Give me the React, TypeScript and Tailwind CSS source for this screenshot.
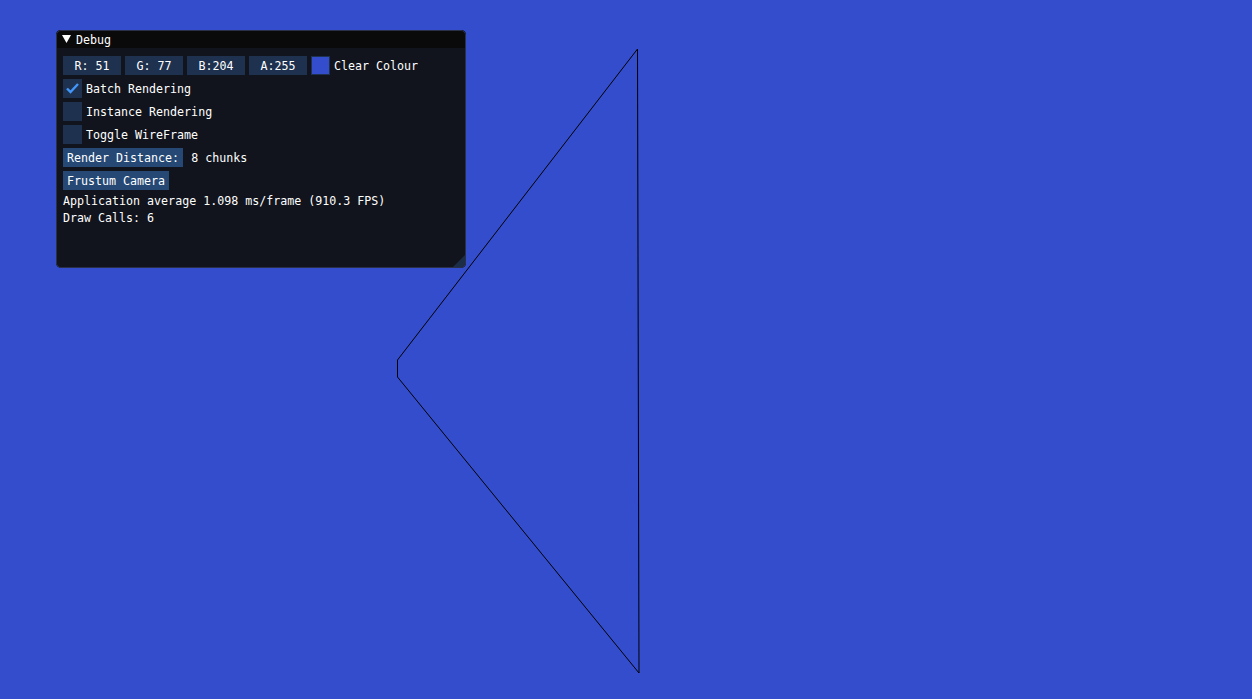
function Frame({ children, className = "" }: { children?: React.ReactNode; className?: string }) {
  return (
    <div className={`h-[19px] bg-[#1e314e] flex items-center justify-center pt-[2px] ${className}`}>{children}</div>
  );
}

function Checkbox({ label, checked }: { label: string; checked?: boolean }) {
  return (
    <div className="flex items-center h-[19px] gap-[4px]">
      <div className="w-[19px] h-[19px] bg-[#1e314e] flex items-center justify-center">
        {checked && (
          <svg width="15" height="15" viewBox="0 0 15 15">
            <polyline points="2,7.5 5.5,11 13,3" fill="none" stroke="#4296fa" strokeWidth="2.4" />
          </svg>
        )}
      </div>
      <span className="pt-[2px]">{label}</span>
    </div>
  );
}

export default function App() {
  return (
    <div className="relative w-[1252px] h-[699px] bg-[#334dcc] overflow-hidden text-white font-['DejaVu_Sans_Mono',monospace] text-[11.65px] leading-[13px]">
      {/* scene */}
      <svg className="absolute inset-0" width="1252" height="699">
        <polyline points="637.5,49 397.5,360 397.5,377 639,673 637.5,49" fill="none" stroke="#000" strokeWidth="1" />
      </svg>

      {/* Debug window */}
      <div className="absolute left-[56px] top-[30px] w-[410px] h-[238px] rounded-[5px] overflow-hidden bg-[#11141c] outline outline-1 -outline-offset-1 outline-[#2a3048] flex flex-col">
        <div className="h-[18px] bg-[#0a0a0a] flex items-center gap-[5px] pl-[6px] shrink-0">
          <svg width="9" height="8" viewBox="0 0 9 8">
            <polygon points="0,0 9,0 4.5,8" fill="#fff" />
          </svg>
          <span className="pt-[2px]">Debug</span>
        </div>
        <div className="flex flex-col gap-[4px] pl-[7px] pt-[8px]">
          <div className="flex items-center gap-[4px]">
            <Frame className="w-[58px]">R: 51</Frame>
            <Frame className="w-[58px]">G: 77</Frame>
            <Frame className="w-[58px]">B:204</Frame>
            <Frame className="w-[58px]">A:255</Frame>
            <div className="w-[19px] h-[19px] bg-[#1e314e] p-[1px]">
              <div className="w-full h-full bg-[#334dcc]" />
            </div>
            <span className="pt-[2px]">Clear Colour</span>
          </div>
          <Checkbox label="Batch Rendering" checked />
          <Checkbox label="Instance Rendering" />
          <Checkbox label="Toggle WireFrame" />
          <div className="flex items-center gap-[8px]">
            <div className="h-[19px] bg-[#254874] px-[4px] pt-[2px] flex items-center">Render Distance:</div>
            <span className="pt-[2px]">8 chunks</span>
          </div>
          <div className="flex">
            <div className="h-[19px] bg-[#254874] px-[4px] pt-[2px] flex items-center">Frustum Camera</div>
          </div>
          <div className="flex flex-col gap-[4px] pt-[1px]">
            <span>Application average 1.098 ms/frame (910.3 FPS)</span>
            <span>Draw Calls: 6</span>
          </div>
        </div>
        <div className="flex-1" />
        <div className="flex justify-end">
          <svg width="14" height="14" viewBox="0 0 14 14">
            <polygon points="14,0 14,14 0,14" fill="#1b2d47" />
          </svg>
        </div>
      </div>
    </div>
  );
}
